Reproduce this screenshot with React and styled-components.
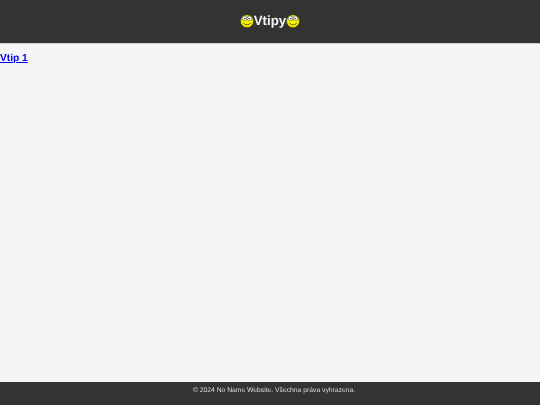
import React from "react";
import styled, { createGlobalStyle } from "styled-components";

const Global = createGlobalStyle`
  html, body { margin: 0; padding: 0; height: 100%; }
  body {
    font-family: "Liberation Sans", Arial, sans-serif;
    background: #f5f5f5;
    text-rendering: geometricPrecision;
    -webkit-font-smoothing: antialiased;
  }
  #root { height: 100%; }
`;
const Page = styled.div`
  height: 405px;
  display: flex;
  flex-direction: column;
  overflow: hidden;
`;
const Header = styled.header`
  height: 44px;
  flex: none;
  padding-bottom: 2px;
  background: #333;
  color: #fff;
  display: flex;
  align-items: center;
  justify-content: center;
  border-bottom: 1px solid #ccc;
  box-sizing: border-box;
`;
const Title = styled.h1`
  margin: 0;
  font-size: 13.3px;
  font-weight: 700;
  line-height: 17px;
  display: flex;
  align-items: center;
  color: #f4f4f4;
`;
const TitleText = styled.span`
  filter: blur(0.25px);
`;
const Main = styled.main`
  flex: 1;
  padding-top: 4px;
`;
const JokeLink = styled.a`
  display: inline-block;
  font-size: 10.2px;
  font-weight: 700;
  line-height: 13px;
  color: #0000ee;
  text-decoration: underline;
  filter: blur(0.25px);
`;
const Footer = styled.footer`
  height: 23px;
  flex: none;
  background: #333;
  color: #ddd;
  font-size: 6.75px;
  line-height: 9px;
  padding: 4px 0 0 8px;
  box-sizing: border-box;
  text-align: center;
`;
const FooterText = styled.span`
  display: inline-block;
  filter: blur(0.25px);
`;
const FaceIcon = styled.svg`
  display: block;
  width: 14px;
  height: 14px;
  flex: none;
`;
const Face = () => (
  <FaceIcon viewBox="0 0 14 14">
    <circle cx="7" cy="7.2" r="6.5" fill="#f7f200" stroke="#35350c" strokeWidth="0.7" />
    <circle cx="4.6" cy="4.3" r="2.3" fill="#fff" stroke="#555" strokeWidth="0.6" />
    <circle cx="9.4" cy="4.3" r="2.3" fill="#fff" stroke="#555" strokeWidth="0.6" />
    <circle cx="4.9" cy="4.6" r="0.75" fill="#222" />
    <circle cx="9.1" cy="4.6" r="0.75" fill="#222" />
    <path d="M3.2 9 Q7 12.8 10.8 9" fill="none" stroke="#444" strokeWidth="0.8" />
  </FaceIcon>
);
export default function App() {
  return (
    <Page>
      <Global />
      <Header>
        <Title>
          <Face />
          <TitleText>Vtipy</TitleText>
          <Face />
        </Title>
      </Header>
      <Main>
        <JokeLink href="#">Vtip 1</JokeLink>
      </Main>
      <Footer>
        <FooterText>© 2024 No Name Website. Všechna práva vyhrazena.</FooterText>
      </Footer>
    </Page>
  );
}
